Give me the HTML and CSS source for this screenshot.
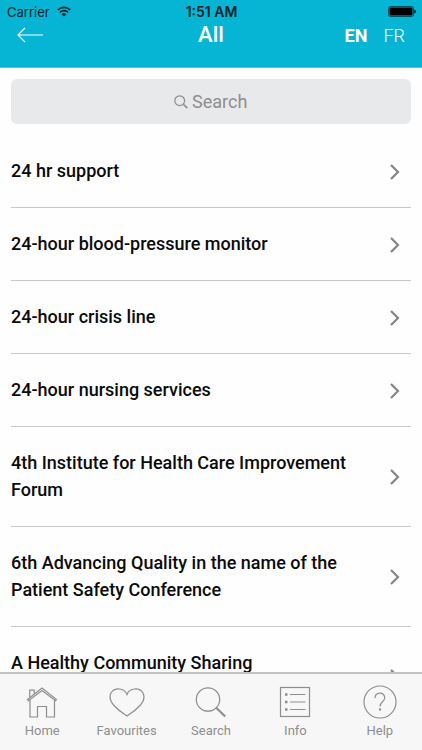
FILE: index.html
```html
<!DOCTYPE html>
<html lang="en">
<head>
    <title>All</title>
    <meta charset="utf-8">
    <meta name="viewport" content="width=device-width, initial-scale=1">
    <link rel="stylesheet" href="styles.css">
</head>
<body>

    <!-- Header -->
    <header class="header">
        <div class="status">
            <div class="status-left">
                <span>Carrier</span>
                <svg class="wifi" viewBox="0 0 14 11" width="14" height="11">
                    <path d="M.7 4a8.900 8.900 0 0 1 12.600 0M2.800 6.300a6 6 0 0 1 8.400 0" fill="none" stroke="#06232a" stroke-width="1.700"/>
                    <path d="M7 10.600L4.600 8.200a3.400 3.400 0 0 1 4.800 0z" fill="#06232a"/>
                </svg>
            </div>
            <span class="clock">1:51 AM</span>
            <div class="status-right">
                <svg viewBox="0 0 28 11" width="28" height="11">
                    <rect x="0.5" y="0.5" width="25" height="10" rx="2" fill="none" stroke="#06525f"/>
                    <rect x="1.5" y="1.5" width="23" height="8" rx="1" fill="#000"/>
                    <path d="M26.300 3.500q1.500.5 1.500 2t-1.500 2z" fill="#000"/>
                </svg>
            </div>
        </div>
        <div class="navbar">
            <button class="back" aria-label="Back">
                <svg viewBox="0 0 26 16" width="26" height="16">
                    <path d="M8 .8L1 8l7 7.200M1 8h25" fill="none" stroke="#fff" stroke-width="1.200"/>
                </svg>
            </button>
            <h1 class="title">All</h1>
            <div class="languages">
                <button class="language active">EN</button>
                <button class="language">FR</button>
            </div>
        </div>
    </header>

    <!-- Search and list -->
    <main class="content">
        <label class="search">
            <svg viewBox="0 0 14 14" width="14" height="14">
                <circle cx="5.700" cy="5.700" r="4.900" fill="none" stroke="#8e8e90" stroke-width="1.200"/>
                <path d="M9.400 9.400l4 3.800" stroke="#8e8e90" stroke-width="1.600"/>
            </svg>
            <input class="search-input" type="text" placeholder="Search" aria-label="Search">
        </label>

        <ul class="list">
            <li><a class="item" href="#"><span class="name">24 hr support</span><svg class="chevron" viewBox="0 0 10 16" width="10" height="16"><path d="M1 1l7 7-7 7"/></svg></a></li>
            <li><a class="item" href="#"><span class="name">24-hour blood-pressure monitor</span><svg class="chevron" viewBox="0 0 10 16" width="10" height="16"><path d="M1 1l7 7-7 7"/></svg></a></li>
            <li><a class="item" href="#"><span class="name">24-hour crisis line</span><svg class="chevron" viewBox="0 0 10 16" width="10" height="16"><path d="M1 1l7 7-7 7"/></svg></a></li>
            <li><a class="item" href="#"><span class="name">24-hour nursing services</span><svg class="chevron" viewBox="0 0 10 16" width="10" height="16"><path d="M1 1l7 7-7 7"/></svg></a></li>
            <li><a class="item" href="#"><span class="name">4th Institute for Health Care Improvement Forum</span><svg class="chevron" viewBox="0 0 10 16" width="10" height="16"><path d="M1 1l7 7-7 7"/></svg></a></li>
            <li><a class="item" href="#"><span class="name">6th Advancing Quality in the name of the Patient Safety Conference</span><svg class="chevron" viewBox="0 0 10 16" width="10" height="16"><path d="M1 1l7 7-7 7"/></svg></a></li>
            <li><a class="item" href="#"><span class="name two-lines">A Healthy Community Sharing</span><svg class="chevron" viewBox="0 0 10 16" width="10" height="16"><path d="M1 1l7 7-7 7"/></svg></a></li>
        </ul>
    </main>

    <!-- Tab bar -->
    <nav class="tabs">
        <a class="tab" href="#">
            <svg viewBox="0 0 36 34" width="36" height="34">
                <path d="M3.500 14.500L18 3l14.500 11.500-1 1.200L18 5.600 4.500 15.700z"/>
                <path d="M5.700 12V5.200h4.500V8.700M6 15v17h7.500V21.500h9V32H30.500V15"/>
            </svg>
            <span>Home</span>
        </a>
        <a class="tab" href="#">
            <svg viewBox="0 0 36 34" width="36" height="34">
                <path d="M18 9.500C15.500 2.500 5.500 2.300 2 8c-2 4-.5 8.500 2.500 12C8.500 24.500 13 28 18 31c5-3 9.500-6.500 13.500-11 3-3.500 4.500-8 2.500-12C30.500 2.300 20.500 2.500 18 9.500z"/>
            </svg>
            <span>Favourites</span>
        </a>
        <a class="tab" href="#">
            <svg viewBox="0 0 36 34" width="36" height="34">
                <circle cx="15" cy="14.500" r="11.700"/>
                <path d="M23.200 22.800l9 8.700" stroke-width="2.200"/>
            </svg>
            <span>Search</span>
        </a>
        <a class="tab" href="#">
            <svg viewBox="0 0 36 34" width="36" height="34">
                <rect x="3.500" y="2.500" width="29" height="29"/>
                <path d="M13 9.500h15.500M13 17h15.500M13 24.500h15.500"/>
                <path d="M8 9.500h2.500M8 17h2.500M8 24.500h2.500" stroke-width="2.400"/>
            </svg>
            <span>Info</span>
        </a>
        <a class="tab" href="#">
            <svg viewBox="0 0 36 34" width="36" height="34">
                <circle cx="18" cy="17" r="16"/>
                <path d="M13 13.300c0-6.800 9.700-6.800 9.700-.5 0 4.200-4.700 3.700-4.700 8.700"/>
                <circle cx="18" cy="24.500" r=".6"/>
            </svg>
            <span>Help</span>
        </a>
    </nav>

</body>
</html>
```
FILE: styles.css
```css
* {
    box-sizing: border-box;
}

body {
    margin: 0;
    height: 100vh;
    display: flex;
    flex-direction: column;
    background-color: #fefefe;
    font-family: Roboto, sans-serif;
    color: #0a0a0a;
}

button {
    padding: 0;
    border: none;
    background: none;
    font-family: inherit;
}

svg {
    display: block;
    flex: none;
}

/* Header */
.header {
    flex: none;
    padding-bottom: 20px;
    background-color: #06b5d3;
    border-bottom: 1px solid #4fcbe0;
}

.status {
    display: grid;
    grid-template-columns: 1fr auto 1fr;
    align-items: center;
    height: 23px;
    padding: 0 6px 0 7px;
    font-family: Inter, sans-serif;
    font-size: 13px;
    color: #06232a;
}

.status-left {
    display: flex;
    align-items: center;
    gap: 7px;
}

.status-right {
    display: flex;
    justify-content: flex-end;
}

.clock {
    font-size: 14px;
    font-weight: 600;
}

.navbar {
    display: grid;
    grid-template-columns: 1fr auto 1fr;
    align-items: center;
    height: 24px;
    padding: 0 17px;
}

.title {
    margin: 0;
    font-size: 22px;
    font-weight: 500;
    line-height: 24px;
    color: #fff;
}

.languages {
    display: flex;
    justify-content: flex-end;
    gap: 16px;
}

.language {
    font-size: 18px;
    font-weight: 300;
    color: #fff;
}

.language.active {
    font-weight: 700;
}

/* Search and list */
.content {
    flex: 1;
    min-height: 0;
    padding: 11px 11px 0;
    overflow: hidden;
}

.search {
    display: flex;
    justify-content: center;
    align-items: center;
    gap: 4px;
    height: 45px;
    margin-bottom: 11px;
    border-radius: 6px;
    background-color: #e8e9eb;
}

.search-input {
    width: 56px;
    padding: 0;
    border: none;
    outline: none;
    background: none;
    font-family: inherit;
    font-size: 18px;
    color: #0a0a0a;
}

.search-input::placeholder {
    color: #8e8e90;
    opacity: 1;
}

.list {
    margin: 0;
    padding: 0;
    list-style: none;
}

.item {
    display: flex;
    justify-content: space-between;
    align-items: center;
    gap: 32px;
    padding: 22px 11px 23px 0;
    border-bottom: 1px solid #c8c8c8;
    font-size: 18px;
    font-weight: 500;
    line-height: 27px;
    color: inherit;
    text-decoration: none;
}

.two-lines {
    min-height: 54px;
}

.chevron {
    margin-top: 2px;
    fill: none;
    stroke: #858585;
    stroke-width: 2.2;
}

/* Tab bar */
.tabs {
    flex: none;
    display: flex;
    border-top: 2px solid #c4c4c4;
    background-color: #f7f7f7;
}

.tab {
    flex: 1;
    display: flex;
    flex-direction: column;
    align-items: center;
    gap: 4px;
    padding: 11px 0;
    font-size: 13px;
    line-height: 16px;
    color: #8e8e8e;
    text-decoration: none;
}

.tab svg {
    fill: none;
    stroke: #8e8e8e;
    stroke-width: 1.2;
}
```
